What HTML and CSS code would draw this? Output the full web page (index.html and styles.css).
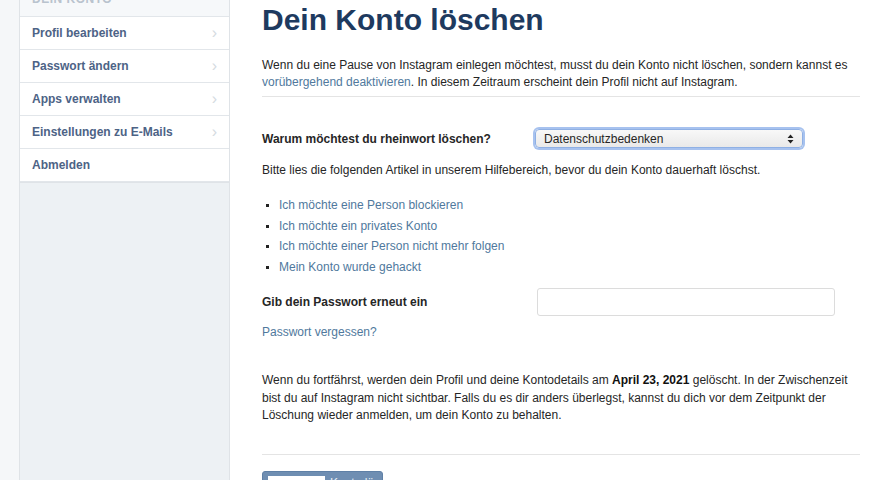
FILE: index.html
```html
<!DOCTYPE html>
<html lang="de">
<head>
    <meta charset="UTF-8">
    <title>Dein Konto löschen</title>
    <link rel="stylesheet" href="styles.css">
</head>
<body>
    <div class="page">
        <div class="gutter"></div>
        <nav class="sidebar">
            <div class="side-head">DEIN KONTO</div>
            <a class="side-item" href="#">Profil bearbeiten <span class="chev">&#8250;</span></a>
            <a class="side-item" href="#">Passwort ändern <span class="chev">&#8250;</span></a>
            <a class="side-item" href="#">Apps verwalten <span class="chev">&#8250;</span></a>
            <a class="side-item" href="#">Einstellungen zu E-Mails <span class="chev">&#8250;</span></a>
            <a class="side-item" href="#">Abmelden</a>
            <div class="side-rest"></div>
        </nav>
        <main class="content">
            <h1>Dein Konto löschen</h1>
            <p class="intro">Wenn du eine Pause von Instagram einlegen möchtest, musst du dein Konto nicht löschen, sondern kannst es <a href="#">vorübergehend deaktivieren</a>. In diesem Zeitraum erscheint dein Profil nicht auf Instagram.</p>
            <hr class="top-rule">
            <div class="row reason">
                <label>Warum möchtest du rheinwort löschen?</label>
                <div class="select">
                    <span>Datenschutzbedenken</span>
                    <svg width="7" height="10" viewBox="0 0 7 10"><path d="M0.5 4 L3.5 0.5 L6.5 4 Z M0.5 6 L3.5 9.5 L6.5 6 Z" fill="#222"/></svg>
                </div>
            </div>
            <p class="help">Bitte lies die folgenden Artikel in unserem Hilfebereich, bevor du dein Konto dauerhaft löschst.</p>
            <ul class="articles">
                <li><a href="#">Ich möchte eine Person blockieren</a></li>
                <li><a href="#">Ich möchte ein privates Konto</a></li>
                <li><a href="#">Ich möchte einer Person nicht mehr folgen</a></li>
                <li><a href="#">Mein Konto wurde gehackt</a></li>
            </ul>
            <div class="row password">
                <label>Gib dein Passwort erneut ein</label>
                <input type="password">
            </div>
            <a class="forgot" href="#">Passwort vergessen?</a>
            <p class="notice">Wenn du fortfährst, werden dein Profil und deine Kontodetails am <b>April 23, 2021</b> gelöscht. In der Zwischenzeit bist du auf Instagram nicht sichtbar. Falls du es dir anders überlegst, kannst du dich vor dem Zeitpunkt der Löschung wieder anmelden, um dein Konto zu behalten.</p>
            <hr class="bottom-rule">
            <button class="delete-btn"><span class="btn-inner"></span><span class="btn-label">Konto löschen</span></button>
        </main>
    </div>
</body>
</html>
```

FILE: styles.css
```css
html, body {
    margin: 0;
    padding: 0;
    height: 100%;
    overflow: hidden;
}
body {
    font-family: "Liberation Sans", Arial, sans-serif;
    background-color: #f4f6f8;
    color: #262626;
}
.page {
    display: flex;
    height: 480px;
}
.gutter {
    width: 19px;
    background-color: #f5f7f9;
    flex-shrink: 0;
}
.sidebar {
    width: 209px;
    flex-shrink: 0;
    display: flex;
    flex-direction: column;
    border-left: 1px solid #dfe3e7;
    border-right: 1px solid #dfe3e7;
    background-color: #edf1f4;
    margin-top: -16px;
}
.side-head {
    height: 32px;
    line-height: 30px;
    padding-left: 12px;
    font-size: 12px;
    font-weight: bold;
    letter-spacing: 0.5px;
    color: #b9c3ce;
    background-color: #f6f8fa;
    border-bottom: 1px solid #e2e6ea;
}
.side-item {
    display: flex;
    justify-content: space-between;
    align-items: center;
    height: 32px;
    padding: 0 12px;
    font-size: 12px;
    font-weight: bold;
    color: #4d6386;
    text-decoration: none;
    background-color: #fff;
    border-bottom: 1px solid #e2e6ea;
}
.chev {
    color: #d5dbe1;
    font-size: 16px;
    font-weight: normal;
}
.side-rest {
    flex: 1;
    border-top: 1px solid #dfe3e7;
}
.content {
    flex: 1;
    background-color: #fff;
    padding: 0 20px 0 32px;
    font-size: 12px;
}
h1 {
    margin: 0;
    font-size: 30px;
    color: #1e3a5f;
    line-height: 40px;
}
a {
    color: #50799d;
    text-decoration: none;
}
.intro {
    margin: 17px 0 0 0;
    line-height: 17px;
}
hr {
    border: 0;
    border-top: 1px solid #e4e4e4;
    margin: 0;
}
.top-rule {
    margin-top: 5px;
}
.row {
    display: flex;
    align-items: center;
}
.row label {
    width: 273px;
    font-weight: bold;
    font-size: 12px;
}
.reason {
    margin-top: 32px;
}
.select {
    width: 250px;
    height: 17px;
    display: flex;
    justify-content: space-between;
    align-items: center;
    padding: 0 8px 0 8px;
    border: 1px solid #8fb0e4;
    border-radius: 4px;
    box-shadow: 0 0 0 2px #a7c2ef;
    background: linear-gradient(#f8f8f8, #e9e9e9);
    font-size: 12px;
}
.help {
    margin: 15px 0 0 0;
}
.articles {
    margin: 18px 0 0 0;
    padding-left: 17px;
    list-style: square;
    line-height: 20.6px;
}
.articles li::marker {
    color: #222;
    font-size: 10px;
}
.password {
    margin-top: 11px;
}
.password input {
    width: 296px;
    height: 26px;
    margin-left: 2px;
    border: 1px solid #dcdcdc;
    border-radius: 3px;
    padding: 0;
}
.forgot {
    display: block;
    margin-top: 9px;
}
.notice {
    margin: 33px 0 0 0;
    line-height: 17.5px;
}
.notice b {
    color: #111;
}
.bottom-rule {
    margin-top: 29px;
}
.delete-btn {
    margin-top: 16px;
    width: 121px;
    height: 28px;
    border: 1px solid #5f80a6;
    border-radius: 3px;
    background-color: #6f8eb2;
    color: #e8eef5;
    font-family: "Liberation Sans", Arial, sans-serif;
    font-size: 12px;
    padding: 4px 5px;
    display: flex;
    gap: 5px;
    align-items: flex-start;
    white-space: nowrap;
    overflow: hidden;
}
.btn-inner {
    width: 57px;
    height: 14px;
    flex-shrink: 0;
    background-color: #fff;
}
.btn-label {
    line-height: 14px;
}
```
